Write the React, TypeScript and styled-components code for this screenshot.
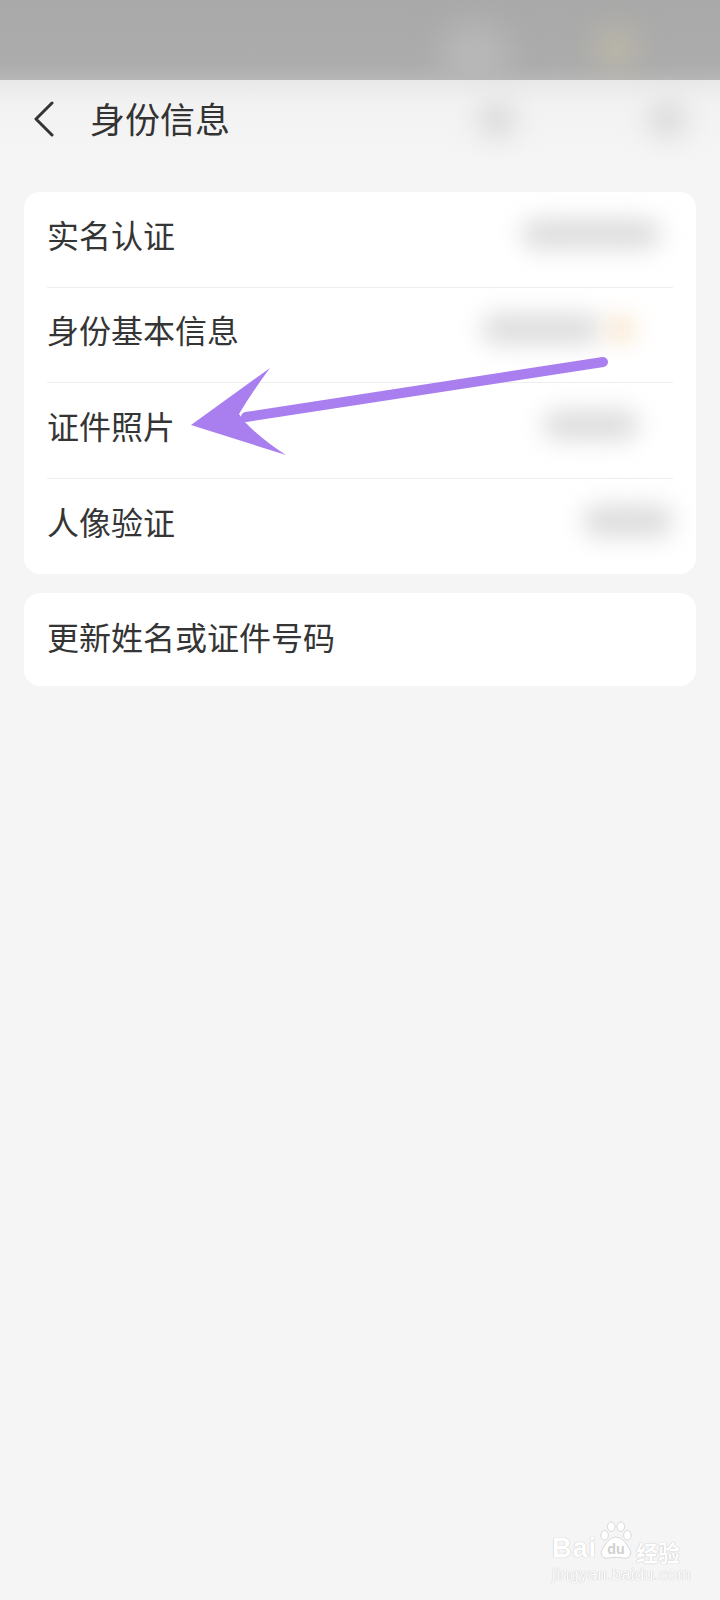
import styled, { createGlobalStyle } from "styled-components";

const GlobalStyle = createGlobalStyle`
  html, body {
    margin: 0;
    padding: 0;
    background: #f5f5f5;
  }
  body {
    font-family: "Noto Sans CJK SC", "Noto Sans", sans-serif;
    color: #333333;
  }
`;

const Page = styled.div`
  position: relative;
  width: 720px;
  min-height: 1600px;
  background: #f5f5f5;
  overflow: hidden;
`;

const StatusBar = styled.div`
  position: relative;
  height: 80px;
  background: linear-gradient(to bottom, #a9a9a9 0%, #acacac 80%, #b6b6b6 100%);
`;

const Glow = styled.span<{ $x: number; $y: number; $size: number; $color: string }>`
  position: absolute;
  left: ${(p) => p.$x}px;
  top: ${(p) => p.$y}px;
  width: ${(p) => p.$size}px;
  height: ${(p) => p.$size}px;
  border-radius: 50%;
  background: ${(p) => p.$color};
  filter: blur(16px);
`;

const Header = styled.header`
  position: relative;
  height: 78px;
  display: flex;
  align-items: center;
  padding-left: 32px;
  background: linear-gradient(to bottom, #e8e8e8 0%, #f2f2f2 30%, #f5f5f5 100%);
`;

const BackIcon = styled.svg`
  width: 24px;
  height: 36px;
  flex: none;
`;

const Title = styled.h1`
  margin: 0 0 4px 34px;
  font-size: 35px;
  font-weight: 400;
  line-height: 1;
  color: #333333;
`;

const HeaderActions = styled.div`
  margin-left: auto;
  display: flex;
  align-items: center;
  gap: 130px;
  padding-right: 33px;
`;

const Blur = styled.span<{ $w: number; $h: number; $color?: string; $radius?: number }>`
  display: block;
  flex: none;
  width: ${(p) => p.$w}px;
  height: ${(p) => p.$h}px;
  border-radius: ${(p) => p.$radius ?? 15}px;
  background: ${(p) => p.$color ?? "#dcdcdc"};
  filter: blur(12px);
`;

const List = styled.main`
  padding: 34px 24px 0;
  display: flex;
  flex-direction: column;
  gap: 19px;
`;

const Card = styled.section`
  background: #ffffff;
  border-radius: 16px;
  display: flex;
  flex-direction: column;
`;

const Row = styled.div<{ $h?: number; $lift?: number }>`
  box-sizing: border-box;
  height: ${(p) => p.$h ?? 95.5}px;
  margin: 0 23px;
  padding-bottom: ${(p) => p.$lift ?? 11}px;
  display: flex;
  align-items: center;
  justify-content: space-between;
  border-bottom: 1px solid #eeeeee;
  &:last-child {
    border-bottom: none;
  }
`;

const Label = styled.span`
  font-size: 32px;
  line-height: 1;
  color: #353535;
  white-space: nowrap;
`;

const Value = styled.div<{ $end: number }>`
  display: flex;
  align-items: center;
  gap: 8px;
  margin-right: ${(p) => p.$end}px;
`;

const ArrowLayer = styled.svg`
  position: absolute;
  left: 0;
  top: 0;
  width: 720px;
  height: 600px;
  pointer-events: none;
`;

const Watermark = styled.div`
  position: absolute;
  left: 552px;
  top: 1518px;
  display: flex;
  flex-direction: column;
  align-items: flex-start;
  color: #ffffff;
  pointer-events: none;
`;

const MarkTop = styled.div`
  display: flex;
  align-items: flex-end;
  height: 44px;
`;

const MarkBai = styled.span`
  font-family: "Liberation Sans", Arial, sans-serif;
  font-weight: 700;
  font-size: 27px;
  line-height: 1;
  letter-spacing: 1px;
  color: #ffffff;
  text-shadow: 0 0 1px #c6c6c6, 0 0 1px #c6c6c6;
`;

const MarkJy = styled.span`
  font-family: "Noto Sans CJK SC", sans-serif;
  font-weight: 700;
  font-size: 22px;
  line-height: 1;
  margin-left: 1px;
  text-shadow: 0 0 1px #c6c6c6, 0 0 1px #c6c6c6;
`;

const MarkUrl = styled.span`
  font-family: "Liberation Sans", Arial, sans-serif;
  font-size: 16px;
  line-height: 1;
  margin-top: 5px;
  letter-spacing: 0.6px;
  text-shadow: 0 0 1px #c6c6c6, 0 0 1px #c6c6c6;
`;

function PawLogo() {
  return (
    <svg width="38" height="44" viewBox="0 0 40 44">
      <g fill="#ffffff" stroke="#cdcdcd" strokeWidth="0.8">
        <ellipse cx="8" cy="17" rx="4" ry="5" />
        <ellipse cx="15" cy="8" rx="4" ry="5" />
        <ellipse cx="25" cy="8" rx="4" ry="5" />
        <ellipse cx="32" cy="17" rx="4" ry="5" />
        <path d="M20 19 C13 19 8 27 5 33 C3 38 7 42 12 41 C16 40 24 40 28 41 C33 42 37 38 35 33 C32 27 27 19 20 19 Z" />
      </g>
      <text
        x="20"
        y="37"
        textAnchor="middle"
        fontFamily="Liberation Sans, Arial, sans-serif"
        fontWeight="700"
        fontSize="15"
        fill="#d0d0d0"
      >
        du
      </text>
    </svg>
  );
}

const rows = [
  { label: "实名认证", end: 12, blobs: [{ w: 140, h: 30 }] },
  { label: "身份基本信息", end: 40, blobs: [{ w: 120, h: 30 }, { w: 24, h: 24, color: "#f8dcba", radius: 12 }] },
  { label: "证件照片", end: 34, blobs: [{ w: 96, h: 30 }] },
  { label: "人像验证", end: 0, blobs: [{ w: 90, h: 32 }] },
];

export default function App() {
  return (
    <Page>
      <GlobalStyle />
      <StatusBar>
        <Glow $x={440} $y={22} $size={70} $color="#b8b8b8" />
        <Glow $x={598} $y={30} $size={36} $color="#c2bda5" />
      </StatusBar>
      <Header>
        <BackIcon viewBox="0 0 24 36">
          <polyline points="20,2 4,18 20,34" fill="none" stroke="#333333" strokeWidth="3" strokeLinecap="round" strokeLinejoin="round" />
        </BackIcon>
        <Title>身份信息</Title>
        <HeaderActions>
          <Blur $w={40} $h={40} $radius={20} $color="#dddddd" />
          <Blur $w={40} $h={40} $radius={20} $color="#dddddd" />
        </HeaderActions>
      </Header>
      <List>
        <Card>
          {rows.map((r) => (
            <Row key={r.label}>
              <Label>{r.label}</Label>
              <Value $end={r.end}>
                {r.blobs.map((b, i) => (
                  <Blur key={i} $w={b.w} $h={b.h} $color={b.color} $radius={b.radius} />
                ))}
              </Value>
            </Row>
          ))}
        </Card>
        <Card>
          <Row $h={93} $lift={8}>
            <Label>更新姓名或证件号码</Label>
          </Row>
        </Card>
      </List>

      <ArrowLayer viewBox="0 0 720 600">
        <line x1="603" y1="362" x2="246" y2="417" stroke="#a97ff0" strokeWidth="10" strokeLinecap="round" />
        <path d="M191 425 L270 368 Q252 392 239 414 L244 421 Q262 440 286 455 Z" fill="#a97ff0" />
      </ArrowLayer>

      <Watermark>
        <MarkTop>
          <MarkBai>Bai</MarkBai>
          <PawLogo />
          <MarkJy>经验</MarkJy>
        </MarkTop>
        <MarkUrl>jingyan.baidu.com</MarkUrl>
      </Watermark>
    </Page>
  );
}
